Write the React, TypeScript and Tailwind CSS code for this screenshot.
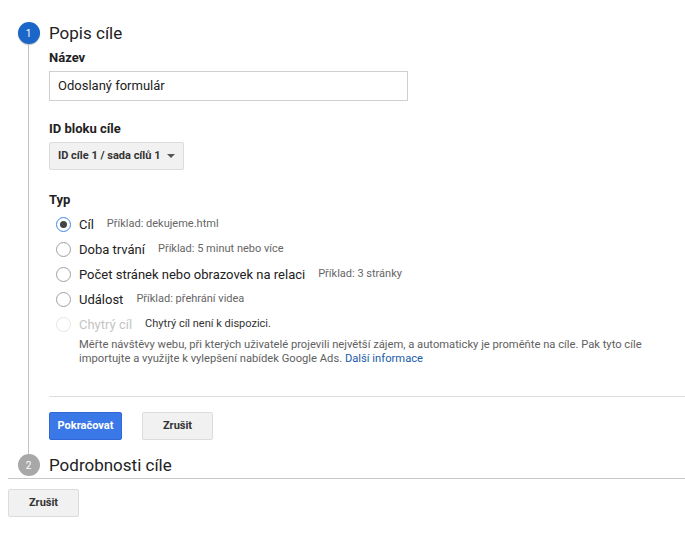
import React from "react";

const font = { fontFamily: "Roboto, 'Noto Sans', Arial, sans-serif" };

function Radio({ checked, disabled }: { checked?: boolean; disabled?: boolean }) {
  if (disabled)
    return <span className="w-[15px] h-[15px] rounded-full border border-[#e6e6e6] shrink-0" />;
  if (checked)
    return (
      <span className="w-[15px] h-[15px] rounded-full border-[1.5px] border-[#4285f4] shrink-0 flex items-center justify-center">
        <span className="w-[7px] h-[7px] rounded-full bg-[#444]" />
      </span>
    );
  return <span className="w-[15px] h-[15px] rounded-full border border-[#a0a0a0] shrink-0" />;
}

function Row({ label, example, checked, disabled }: { label: string; example: string; checked?: boolean; disabled?: boolean }) {
  return (
    <div className="h-[25px] flex items-center pl-[7px]">
      <Radio checked={checked} disabled={disabled} />
      <span className={"ml-[8px] text-[13px] " + (disabled ? "text-[#c4c4c4]" : "text-[#222]")}>{label}</span>
      <span className={"ml-[13px] text-[11px] " + (disabled ? "text-[#333]" : "text-[#666]")}>{example}</span>
    </div>
  );
}

export default function App() {
  return (
    <div className="w-[685px] h-[540px] bg-white overflow-hidden pt-[22px] pl-[8px]" style={font}>
      {/* Step 1 */}
      <div className="flex">
        <div className="w-[41px] flex flex-col items-center shrink-0">
          <div className="w-[22px] h-[22px] rounded-full bg-[#1a67c9] text-white text-[10px] flex items-center justify-center shadow-[0_1px_1px_rgba(0,0,0,0.25)]">
            1
          </div>
          <div className="w-px flex-1 bg-[#c2c2c2]" />
        </div>
        <div className="flex-1 pb-[14px]">
          <div className="h-[22px] leading-[22px] text-[17px] text-[#222]">Popis cíle</div>
          <div className="mt-[6px] leading-[16px] text-[13px] font-bold text-[#222]">Název</div>
          <div className="mt-[5px] w-[359px] h-[30px] border border-[#cfcfcf] flex items-center pl-[8px] text-[13px] text-[#222]">
            Odoslaný formulár
          </div>
          <div className="mt-[20px] leading-[16px] text-[13px] font-bold text-[#222]">ID bloku cíle</div>
          <div className="mt-[5px] w-[135px] h-[28px] border border-[#dcdcdc] bg-[#f1f1f1] rounded-[2px] flex items-center pl-[8px] text-[11px] font-bold text-[#333]">
            ID cíle 1 / sada cílů 1
            <span className="ml-[7px] w-0 h-0 border-l-[4px] border-r-[4px] border-t-[4px] border-l-transparent border-r-transparent border-t-[#555]" />
          </div>
          <div className="mt-[22px] leading-[16px] text-[13px] font-bold text-[#222]">Typ</div>
          <div className="mt-[4px]">
            <Row label="Cíl" example="Příklad: dekujeme.html" checked />
            <Row label="Doba trvání" example="Příklad: 5 minut nebo více" />
            <Row label="Počet stránek nebo obrazovek na relaci" example="Příklad: 3 stránky" />
            <Row label="Událost" example="Příklad: přehrání videa" />
            <Row label="Chytrý cíl" example="Chytrý cíl není k dispozici." disabled />
          </div>
          <div className="mt-[1px] pl-[30px] text-[11.2px] leading-[14px] text-[#616161]">
            Měřte návštěvy webu, při kterých uživatelé projevili největší zájem, a automaticky je proměňte na cíle. Pak tyto cíle
            <br />
            importujte a využijte k vylepšení nabídek Google Ads. <span className="text-[#1a5ca8]">Další informace</span>
          </div>
          <div className="mt-[30px] h-px bg-[#dddddd]" />
          <div className="mt-[15px] flex gap-[20px]">
            <button className="w-[73px] h-[28px] rounded-[2px] bg-[#3b78e7] border border-[#3367d6] text-white text-[11px] font-bold">
              Pokračovat
            </button>
            <button className="w-[71px] h-[28px] rounded-[2px] bg-[#f1f1f1] border border-[#dcdcdc] text-[#333] text-[11px] font-bold">
              Zrušit
            </button>
          </div>
        </div>
      </div>
      {/* Step 2 */}
      <div className="flex pb-[2px] border-b border-[#c8c8c8]">
        <div className="w-[41px] flex flex-col items-center shrink-0">
          <div className="w-[22px] h-[22px] rounded-full bg-[#a8a8a8] text-white text-[10px] flex items-center justify-center">
            2
          </div>
        </div>
        <div className="flex-1 h-[22px] leading-[22px] text-[17px] text-[#222]">Podrobnosti cíle</div>
      </div>
      <div className="mt-[10px]">
        <button className="w-[71px] h-[28px] rounded-[2px] bg-[#f1f1f1] border border-[#dcdcdc] text-[#333] text-[11px] font-bold">
          Zrušit
        </button>
      </div>
    </div>
  );
}
